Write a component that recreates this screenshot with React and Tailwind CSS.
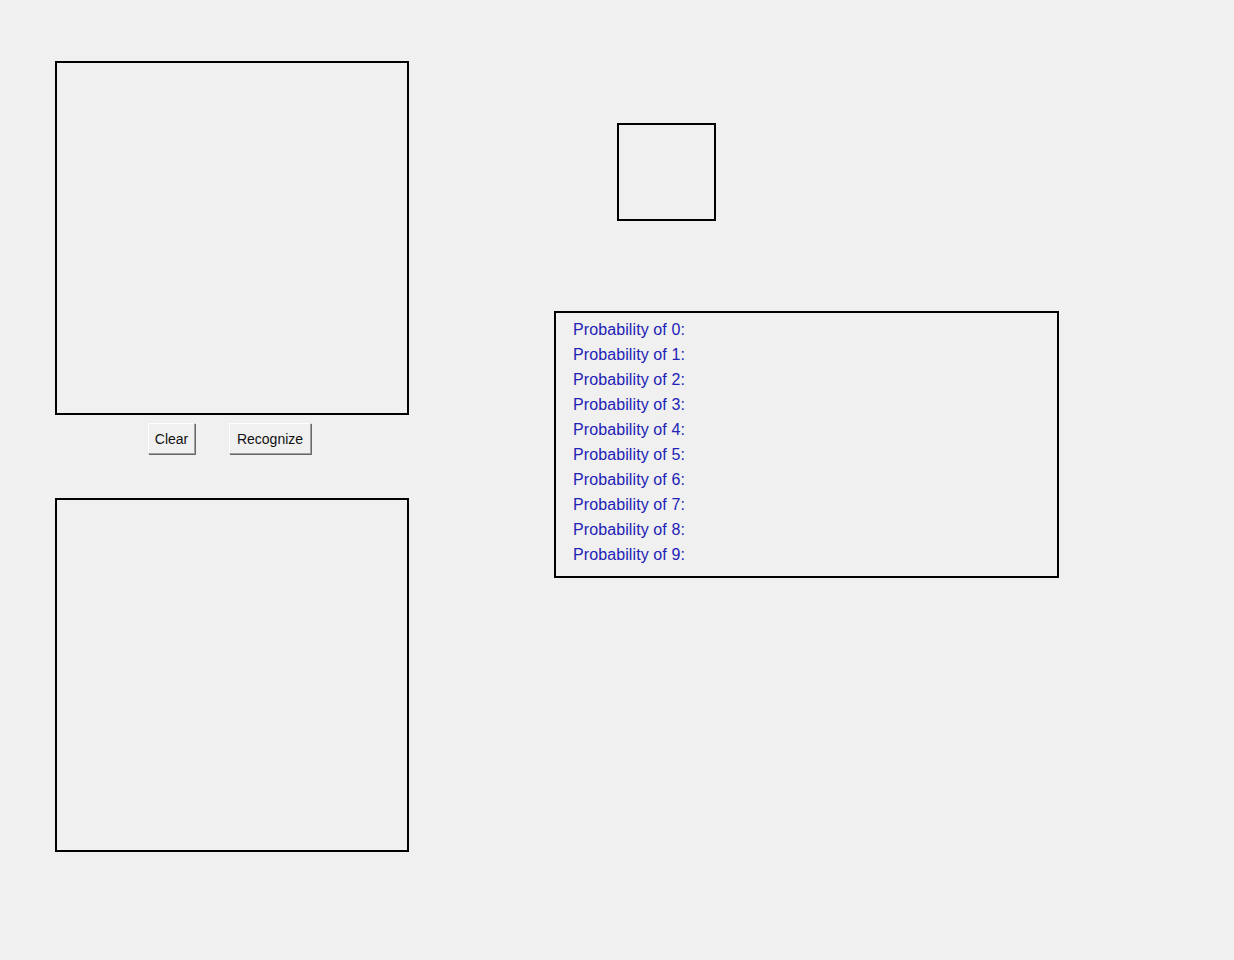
export default function App() {
  const digits = [0, 1, 2, 3, 4, 5, 6, 7, 8, 9];
  return (
    <div className="w-[1234px] h-[960px] bg-[#f0f0f0] flex items-start" style={{ fontFamily: '"Liberation Sans", Arial, sans-serif' }}>
      <div className="ml-[55px] mt-[61px] flex flex-col items-center">
        <div className="w-[354px] h-[354px] border-2 border-black box-border" />
        <div className="flex gap-[34px] mt-[8px] mr-[5px]">
          <button className="w-[47px] h-[31px] bg-[#f0f0f0] border border-t-white border-l-white border-r-[#a0a0a0] border-b-[#a0a0a0] shadow-[1px_1px_0_#696969] text-[14px] text-[#111] leading-none">
            Clear
          </button>
          <button className="w-[82px] h-[31px] bg-[#f0f0f0] border border-t-white border-l-white border-r-[#a0a0a0] border-b-[#a0a0a0] shadow-[1px_1px_0_#696969] text-[14px] text-[#111] leading-none">
            Recognize
          </button>
        </div>
        <div className="w-[354px] h-[354px] border-2 border-black box-border mt-[44px]" />
      </div>
      <div className="ml-[145px] flex flex-col">
        <div className="w-[99px] h-[98px] border-2 border-black box-border ml-[63px] mt-[123px]" />
        <div className="w-[505px] h-[267px] border-2 border-black box-border mt-[90px] pl-[17px] pt-[4px]">
          {digits.map((d) => (
            <div key={d} className="h-[25px] leading-[25px] text-[16px] tracking-[0.1px] text-[#2222b6]">
              Probability of {d}:
            </div>
          ))}
        </div>
      </div>
    </div>
  );
}
